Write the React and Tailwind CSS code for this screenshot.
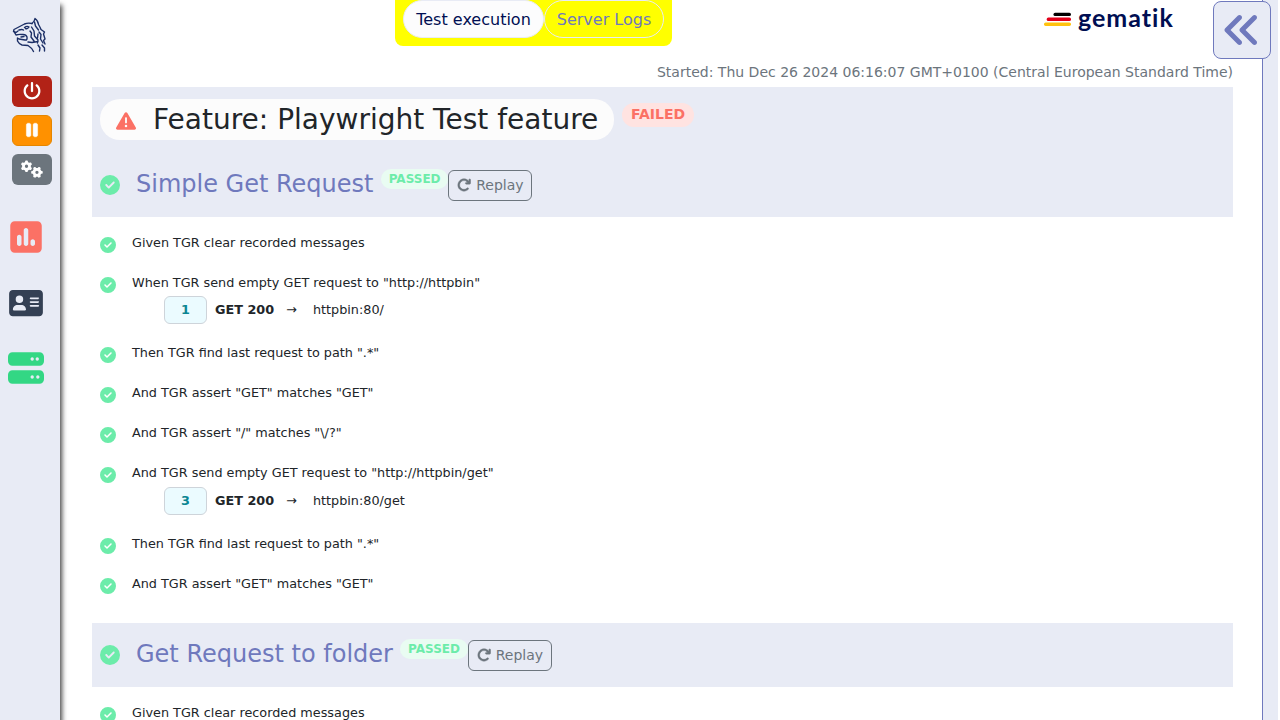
import { FaPowerOff, FaPause, FaGears, FaSquarePollVertical, FaAddressCard, FaServer, FaAnglesLeft, FaTriangleExclamation, FaArrowRotateRight, FaCircleCheck } from "react-icons/fa6";

function Tiger() {
  return (
    <svg viewBox="0 0 40 44" className="h-[44px] w-[40px]" fill="none" stroke="#1c2f66" strokeWidth="1.4" strokeLinecap="round" strokeLinejoin="round">
      <path d="M22 11.500 Q24.500 9.500 25 6.500 Q28 8.500 28.500 12.500 Q30 15 31 17.500 L34.500 20 L33.500 22 L35 27 L33.500 28.500 L35 32" />
      <path d="M22 11.500 Q18 10.500 14.500 12 L4 17.500 L3.500 19.500 L6 20.500 L8 19 M4.500 20.500 L6 23 Q9 22 12 22.500 Q16 22 17 25 Q17.500 28.500 15 28 L9 27 L7.500 26 L7.500 29 Q9 32 12 33 L18 33.500 Q22 36 23.500 39.500" />
      <path d="M9 18 Q12 17 13.500 18 M14.500 15.500 Q17 13.500 19 15 Q17.500 17.500 15.500 16.500 M24.500 10 L25.500 14 L28.500 18 M21.500 15 L24 19 L24.500 24 L28 28 L27.500 31 M20 19 L21.500 21 L21 25 L24 29 M29 20 L31 22.500 L30.500 27 L33 31 M28 22 L27.500 26 M18 30 L22 30.500 L28 29.500 M28 33 L30 36 L29.500 39 M32 33 L34.500 36 L34.500 39 M11 25 L14 24.500" />
    </svg>
  );
}

function Scenario({ title }) {
  return (
    <div className="flex h-16 items-start bg-[#e8ebf5] pl-2 pt-4">
      <FaCircleCheck className="mt-[6px] size-5 text-[#6cecaa]" />
      <h2 className="-mt-0.5 ml-4 text-[24px] leading-[34px] text-[#6f79bd]">{title}</h2>
      <span className="ml-[7.500px] h-5 rounded-full bg-[#e9fcf2] px-[7.700px] text-[12px] font-bold leading-[21px] text-[#6cecaa]">PASSED</span>
      <button className="mt-px flex h-[31px] w-[84px] items-center whitespace-nowrap rounded-md border border-[#6c757d] pl-2 text-[14px] text-[#6c757d]">
        <FaArrowRotateRight className="mb-px mr-[5px] size-[14px]" strokeWidth="16" />Replay
      </button>
    </div>
  );
}

function Step({ text, call }) {
  return (
    <div className="pl-2">
      <div className="flex h-10 items-start">
        <FaCircleCheck className="mt-[12px] size-4 text-[#6cecaa]" />
        <p className="ml-4 mt-[8px] text-[12.800px] leading-[20px] text-[#212529]">{text}</p>
      </div>
      {call && (
        <div className={call.row}>
          <span className="flex h-7 w-[43px] items-center justify-center rounded-md border border-[#ced4da] bg-[#ebfbff] font-bold text-[#0b8693]">{call.number}</span>
          <b className="ml-2">GET 200</b>
          <span className="ml-3">→</span>
          <span className="ml-4">{call.target}</span>
        </div>
      )}
    </div>
  );
}

const steps = [
  { text: "Given TGR clear recorded messages" },
  { text: 'When TGR send empty GET request to "http://httpbin"', call: { number: 1, target: "httpbin:80/", row: "-mt-[9px] ml-16 flex h-[39px] items-start text-[12.800px] leading-[28px] text-[#212529]" } },
  { text: 'Then TGR find last request to path ".*"' },
  { text: 'And TGR assert "GET" matches "GET"' },
  { text: 'And TGR assert "/" matches "\\/?"' },
  { text: 'And TGR send empty GET request to "http://httpbin/get"', call: { number: 3, target: "httpbin:80/get", row: "-mt-[8px] ml-16 flex h-[39px] items-start text-[12.800px] leading-[28px] text-[#212529]" } },
  { text: 'Then TGR find last request to path ".*"' },
  { text: 'And TGR assert "GET" matches "GET"' },
];

export default function App() {
  return (
    <div className="flex h-[720px] w-[1280px] overflow-hidden bg-white font-['DejaVu_Sans',sans-serif]">
      <aside className="z-10 flex w-[60px] shrink-0 flex-col items-start bg-[#e8ebf5] pt-3 shadow-[2px_5px_5px_0px_#444]">
        <div className="ml-[10px]"><Tiger /></div>
        <div className="ml-3 mt-5 flex flex-col gap-2">
          <button className="flex h-[31px] w-10 items-center justify-center rounded-md bg-[#b22217] pb-[2px] text-white"><FaPowerOff className="size-[18px]" /></button>
          <button className="flex h-[31px] w-10 items-center justify-center rounded-md border border-[#e58600] bg-[#ff9100] pb-[2px] text-white"><FaPause className="size-[18px]" stroke="currentColor" strokeWidth="14" /></button>
          <button className="flex h-[31px] w-10 items-center justify-center rounded-md bg-[#6c757d] pb-[2px] text-white"><FaGears className="h-[18px] w-[22px]" /></button>
        </div>
        <FaSquarePollVertical className="ml-2 mt-[34px] size-9 text-[#fb7165]" />
        <FaAddressCard className="ml-[9px] mt-[33px] h-[30px] w-[34px] text-[#344054]" />
        <FaServer className="ml-2 mt-[32px] size-9 text-[#33d784]" />
      </aside>

      <main className="ml-8 w-[1141px] shrink-0">
        <header className="flex h-[60px] items-start">
          <nav className="ml-[303px] flex h-[46px] w-[277px] rounded-b-lg bg-[#ffff00] pl-2 text-[16px]">
            <button className="h-[38px] w-[141px] rounded-[20px] border border-[#e8ebf5] bg-[#fcfcfd] leading-[38px] text-[#000e52]">Test execution</button>
            <button className="h-[38px] w-[120px] rounded-[20px] border border-[#e8ebf5] leading-[38px] text-[#6f79bd]">Server Logs</button>
          </nav>
          <div className="ml-[372px] mt-[2px] flex">
            <svg viewBox="0 0 27 14" className="mt-[10px] h-[14px] w-[27px] shrink-0">
              <rect x="9.500" y="0.800" width="17.500" height="3.300" rx="1.600" fill="#000" />
              <rect x="2.700" y="5.600" width="24.300" height="3.400" rx="1.600" fill="#e2001a" />
              <rect x="0" y="10.600" width="27" height="3.300" rx="1.600" fill="#ffc20e" />
            </svg>
            <span className="ml-[7px] font-['Lato',sans-serif] text-[25px] font-bold leading-[30px] tracking-[1px] text-[#000e52]">gematik</span>
          </div>
        </header>
        <p className="h-[27px] pt-[2px] text-right text-[14px] leading-[21px] text-[#6c757d]">Started: Thu Dec 26 2024 06:16:07 GMT+0100 (Central European Standard Time)</p>
        <div className="flex h-[66px] items-start bg-[#e8ebf5] pl-2 pt-3">
          <div className="flex h-[41px] w-[514px] items-center rounded-[20px] bg-[#fcfcfc] pl-4">
            <FaTriangleExclamation className="mt-[3px] size-5 text-[#fb7165]" />
            <h1 className="ml-[17px] whitespace-nowrap text-[28px] leading-[40px] text-[#212529]">Feature: Playwright Test feature</h1>
          </div>
          <span className="ml-2 mt-[4px] h-6 rounded-full bg-[#ffe3e1] px-[9px] text-[14px] font-bold leading-[23px] text-[#fb7165]">FAILED</span>
        </div>
        <Scenario title="Simple Get Request" />
        <section className="h-[406px] pt-2">
          {steps.map((s, i) => <Step key={i} {...s} />)}
        </section>
        <Scenario title="Get Request to folder" />
        <section className="pt-2"><Step text="Given TGR clear recorded messages" /></section>
      </main>

      <aside className="ml-[29px] w-[16px] shrink-0 border-l border-[#6f79bd] bg-[#e8ebf5] pt-px">
        <button className="relative -left-[50px] flex h-[58px] w-[58px] items-center justify-center rounded-lg border border-[#6f79bd] bg-[#e8ebf5] text-[#6f79bd]">
          <FaAnglesLeft className="size-[40px]" />
        </button>
      </aside>
    </div>
  );
}
